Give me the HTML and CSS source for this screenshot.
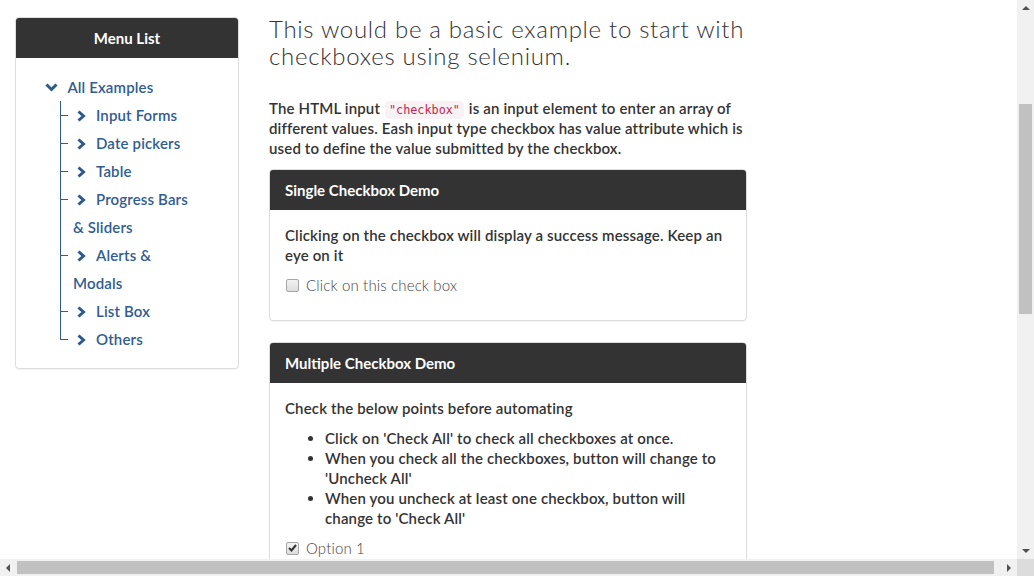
FILE: index.html
```html
<!DOCTYPE html>
<html lang="en">
<head>
<meta charset="utf-8">
<title>Checkbox Demo</title>
<link rel="stylesheet" href="styles.css">
</head>
<body>
<div class="page">
  <aside class="col-side">
    <div class="panel menu">
      <div class="panel-heading centered">Menu List</div>
      <div class="panel-body">
        <ul class="tree">
          <li class="root">
            <svg class="chev-down" width="13" height="9" viewBox="0 0 13 9"><polyline points="1.5,1.5 6.5,6.5 11.5,1.5" fill="none" stroke="#2c5a8c" stroke-width="3"/></svg>
            <a href="#">All Examples</a>
            <ul class="branch">
              <li><svg class="chev" width="9" height="12" viewBox="0 0 9 12"><polyline points="1.5,1.5 6.5,6 1.5,10.5" fill="none" stroke="#2c5a8c" stroke-width="3"/></svg><a href="#">Input Forms</a></li>
              <li><svg class="chev" width="9" height="12" viewBox="0 0 9 12"><polyline points="1.5,1.5 6.5,6 1.5,10.5" fill="none" stroke="#2c5a8c" stroke-width="3"/></svg><a href="#">Date pickers</a></li>
              <li><svg class="chev" width="9" height="12" viewBox="0 0 9 12"><polyline points="1.5,1.5 6.5,6 1.5,10.5" fill="none" stroke="#2c5a8c" stroke-width="3"/></svg><a href="#">Table</a></li>
              <li><svg class="chev" width="9" height="12" viewBox="0 0 9 12"><polyline points="1.5,1.5 6.5,6 1.5,10.5" fill="none" stroke="#2c5a8c" stroke-width="3"/></svg><a href="#">Progress Bars &amp; Sliders</a></li>
              <li><svg class="chev" width="9" height="12" viewBox="0 0 9 12"><polyline points="1.5,1.5 6.5,6 1.5,10.5" fill="none" stroke="#2c5a8c" stroke-width="3"/></svg><a href="#">Alerts &amp; Modals</a></li>
              <li><svg class="chev" width="9" height="12" viewBox="0 0 9 12"><polyline points="1.5,1.5 6.5,6 1.5,10.5" fill="none" stroke="#2c5a8c" stroke-width="3"/></svg><a href="#">List Box</a></li>
              <li><svg class="chev" width="9" height="12" viewBox="0 0 9 12"><polyline points="1.5,1.5 6.5,6 1.5,10.5" fill="none" stroke="#2c5a8c" stroke-width="3"/></svg><a href="#">Others</a></li>
            </ul>
          </li>
        </ul>
      </div>
    </div>
  </aside>

  <main class="col-main">
    <h3 class="title">This would be a basic example to start with checkboxes using selenium.</h3>
    <p class="intro">The HTML input <code>"checkbox"</code> is an input element to enter an array of different values. Eash input type checkbox has value attribute which is used to define the value submitted by the checkbox.</p>

    <div class="panel">
      <div class="panel-heading">Single Checkbox Demo</div>
      <div class="panel-body">
        <p>Clicking on the checkbox will display a success message. Keep an eye on it</p>
        <label class="checkbox"><span class="box"></span>Click on this check box</label>
      </div>
    </div>

    <div class="panel">
      <div class="panel-heading">Multiple Checkbox Demo</div>
      <div class="panel-body">
        <p>Check the below points before automating</p>
        <ul class="points">
          <li>Click on 'Check All' to check all checkboxes at once.</li>
          <li>When you check all the checkboxes, button will change to 'Uncheck All'</li>
          <li>When you uncheck at least one checkbox, button will change to 'Check All'</li>
        </ul>
        <label class="checkbox"><span class="box checked"><svg width="9" height="8" viewBox="0 0 9 8"><polyline points="1,4 3.5,6.5 8,1" fill="none" stroke="#333" stroke-width="2"/></svg></span>Option 1</label>
        <label class="checkbox"><span class="box checked"><svg width="9" height="8" viewBox="0 0 9 8"><polyline points="1,4 3.5,6.5 8,1" fill="none" stroke="#333" stroke-width="2"/></svg></span>Option 2</label>
      </div>
    </div>
  </main>
</div>

<div class="vscroll">
  <span class="arrow up"></span>
  <span class="vthumb"></span>
  <span class="arrow down"></span>
</div>
<div class="hscroll">
  <span class="arrow left"></span>
  <span class="hthumb"></span>
  <span class="arrow right"></span>
</div>
<div class="corner"></div>
</body>
</html>
```

FILE: styles.css
```css
html, body {
  margin: 0;
  padding: 0;
  overflow: hidden;
  background: #fff;
}

body {
  font-family: "Lato", "Noto Sans", sans-serif;
  font-size: 15px;
  font-weight: 600;
  line-height: 20px;
  letter-spacing: 0.15px;
  color: #333;
}

.page {
  width: 1017px;
  display: flex;
  align-items: flex-start;
  padding: 0 15px;
  box-sizing: border-box;
}

.col-side {
  width: 224px;
  margin-right: 30px;
  padding-top: 17px;
  flex: none;
}

.col-main {
  width: 478px;
  flex: none;
}

/* panels */
.panel {
  border: 1px solid #ddd;
  border-radius: 4px;
  background: #fff;
  box-shadow: 0 1px 1px rgba(0,0,0,0.05);
  margin-bottom: 21px;
  overflow: hidden;
}

.panel-heading {
  background: #333;
  color: #fff;
  height: 40px;
  line-height: 40px;
  padding: 0 15px;
  font-weight: 700;
  font-size: 15px;
  letter-spacing: 0;
}

.panel-heading.centered {
  text-align: center;
}

.panel-body {
  padding: 15px;
}

.panel-body p {
  margin: 0 0 10px;
}

/* tree */
.tree {
  list-style: none;
  margin: 0;
  padding: 0 28px 0 14px;
  line-height: 28px;
}

.tree a {
  color: #2f5d91;
  text-decoration: none;
  font-weight: 600;
}

.chev-down {
  margin-right: 6px;
  vertical-align: 1px;
}

.branch {
  list-style: none;
  margin: 0 0 0 28px;
  padding: 0;
}

.branch li {
  position: relative;
}

.branch li::before {
  content: "";
  position: absolute;
  left: -13px;
  top: 0;
  width: 7px;
  height: 14px;
  border-left: 1px solid #2f5d91;
  border-bottom: 1px solid #2f5d91;
}

.branch li::after {
  content: "";
  position: absolute;
  left: -13px;
  top: 14px;
  bottom: 0;
  border-left: 1px solid #2f5d91;
}

.branch li:last-child::after {
  display: none;
}

.chev {
  margin: 0 10px 0 4px;
  vertical-align: -1px;
}

/* main */
.title {
  font-size: 24px;
  font-weight: 300;
  line-height: 27px;
  letter-spacing: 0.7px;
  margin: 15px 0 29px;
  color: #333;
}

.intro {
  margin: 0 0 11px;
}

code {
  font-family: "DejaVu Sans Mono", "Liberation Mono", monospace;
  font-size: 11.8px;
  line-height: 1;
  font-weight: 400;
  letter-spacing: 0;
  color: #c7254e;
  background: #f9f2f4;
  padding: 2px 4px;
  margin: 0 1px;
  border-radius: 4px;
}

.checkbox {
  display: flex;
  align-items: center;
  margin: 10px 0;
  font-weight: 300;
  color: #444;
}

.box {
  width: 11px;
  height: 11px;
  border: 1px solid #a6a6a6;
  border-radius: 2px;
  background: linear-gradient(#f3f3f3, #dcdcdc);
  margin: 0 7px 0 1px;
  display: flex;
  align-items: center;
  justify-content: center;
}

.points {
  margin: 0 0 10px;
  padding-left: 40px;
}

/* fake scrollbars */
.vscroll {
  position: fixed;
  top: 0;
  right: 0;
  width: 17px;
  height: 559px;
  background: #f1f1f1;
}

.vthumb {
  position: absolute;
  left: 2px;
  top: 104px;
  width: 13px;
  height: 210px;
  background: #c1c1c1;
}

.hscroll {
  position: fixed;
  left: 0;
  bottom: 0;
  width: 1017px;
  height: 17px;
  background: #f1f1f1;
}

.hthumb {
  position: absolute;
  left: 17px;
  top: 2px;
  width: 977px;
  height: 13px;
  background: #c1c1c1;
}

.corner {
  position: fixed;
  right: 0;
  bottom: 0;
  width: 17px;
  height: 17px;
  background: #dcdcdc;
}

.arrow {
  position: absolute;
  width: 0;
  height: 0;
  border: 4px solid transparent;
}

.arrow.up {
  left: 5px;
  top: 2px;
  border-bottom-color: #505050;
}

.arrow.down {
  left: 5px;
  bottom: 2px;
  border-top-color: #505050;
}

.arrow.left {
  left: 2px;
  top: 5px;
  border-right-color: #505050;
}

.arrow.right {
  right: 2px;
  top: 5px;
  border-left-color: #505050;
}
```
